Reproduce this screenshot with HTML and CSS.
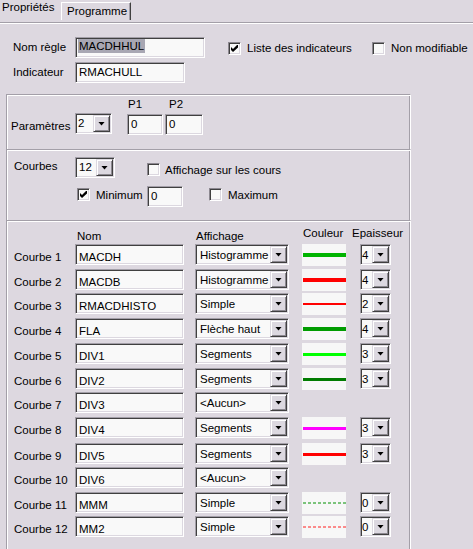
FILE: index.html
```html
<!DOCTYPE html>
<html lang="fr">
<head>
<meta charset="utf-8">
<title>Propriétés</title>
<link rel="stylesheet" href="styles.css">
</head>
<body>
<div class="tabs">
  <div class="tab tab-active">Propriétés</div>
  <div class="tab tab-other">Programme</div>
</div>

<div class="head">
  <div class="hrow">
    <span class="hlbl">Nom règle</span>
    <div class="edit e-nom"><span class="sel">MACDHHUL</span></div>
    <div class="chk chk-liste"><span class="box"><svg class="tick" viewBox="0 0 7 7" width="7" height="7"><polygon points="0,2 2,4 6,0 7,0 7,2.6 2,7 0,5"/></svg></span><span>Liste des indicateurs</span></div>
    <div class="chk chk-nonmod"><span class="box"></span><span>Non modifiable</span></div>
  </div>
  <div class="hrow">
    <span class="hlbl">Indicateur</span>
    <div class="edit e-ind">RMACHULL</div>
  </div>
</div>

<div class="group g1">
  <span class="plbl">Paramètres</span>
  <div class="combo c-par"><span class="val">2</span><span class="btn"></span></div>
  <div class="pcol pcol1"><span class="ptitle">P1</span><div class="edit e-p1">0</div></div>
  <div class="pcol pcol2"><span class="ptitle">P2</span><div class="edit e-p2">0</div></div>
</div>

<div class="group g2">
  <div class="grow grow-a">
    <span class="clbl">Courbes</span>
    <div class="combo c-courbes"><span class="val">12</span><span class="btn"></span></div>
    <div class="chk chk-aff"><span class="box"></span><span>Affichage sur les cours</span></div>
  </div>
  <div class="grow grow-b">
    <div class="chk chk-min"><span class="box"><svg class="tick" viewBox="0 0 7 7" width="7" height="7"><polygon points="0,2 2,4 6,0 7,0 7,2.6 2,7 0,5"/></svg></span><span>Minimum</span></div>
    <div class="edit e-min">0</div>
    <div class="chk chk-max"><span class="box"></span><span>Maximum</span></div>
  </div>
</div>

<div class="group g3">
  <div class="grid">
    <span class="th th-blank"></span>
    <span class="th th-nom">Nom</span>
    <span class="th th-aff">Affichage</span>
    <span class="th th-col">Couleur</span>
    <span class="th th-ep">Epaisseur</span>

    <span class="rl">Courbe 1</span>
    <div class="edit e-row">MACDH</div>
    <div class="combo c-aff"><span class="val">Histogramme</span><span class="btn"></span></div>
    <div class="sw"><i class="ln w4 green1"></i></div>
    <div class="combo c-ep"><span class="val">4</span><span class="btn"></span></div>

    <span class="rl">Courbe 2</span>
    <div class="edit e-row">MACDB</div>
    <div class="combo c-aff"><span class="val">Histogramme</span><span class="btn"></span></div>
    <div class="sw"><i class="ln w4 red"></i></div>
    <div class="combo c-ep"><span class="val">4</span><span class="btn"></span></div>

    <span class="rl">Courbe 3</span>
    <div class="edit e-row">RMACDHISTO</div>
    <div class="combo c-aff"><span class="val">Simple</span><span class="btn"></span></div>
    <div class="sw"><i class="ln w2 red"></i></div>
    <div class="combo c-ep"><span class="val">2</span><span class="btn"></span></div>

    <span class="rl">Courbe 4</span>
    <div class="edit e-row">FLA</div>
    <div class="combo c-aff"><span class="val">Flèche haut</span><span class="btn"></span></div>
    <div class="sw"><i class="ln w4 green4"></i></div>
    <div class="combo c-ep"><span class="val">4</span><span class="btn"></span></div>

    <span class="rl">Courbe 5</span>
    <div class="edit e-row">DIV1</div>
    <div class="combo c-aff"><span class="val">Segments</span><span class="btn"></span></div>
    <div class="sw"><i class="ln w3 lime"></i></div>
    <div class="combo c-ep"><span class="val">3</span><span class="btn"></span></div>

    <span class="rl">Courbe 6</span>
    <div class="edit e-row">DIV2</div>
    <div class="combo c-aff"><span class="val">Segments</span><span class="btn"></span></div>
    <div class="sw"><i class="ln w3 dkgreen"></i></div>
    <div class="combo c-ep"><span class="val">3</span><span class="btn"></span></div>

    <span class="rl">Courbe 7</span>
    <div class="edit e-row">DIV3</div>
    <div class="combo c-aff"><span class="val">&lt;Aucun&gt;</span><span class="btn"></span></div>
    <span class="empty"></span>
    <span class="empty"></span>

    <span class="rl">Courbe 8</span>
    <div class="edit e-row">DIV4</div>
    <div class="combo c-aff"><span class="val">Segments</span><span class="btn"></span></div>
    <div class="sw"><i class="ln w3 magenta"></i></div>
    <div class="combo c-ep"><span class="val">3</span><span class="btn"></span></div>

    <span class="rl">Courbe 9</span>
    <div class="edit e-row">DIV5</div>
    <div class="combo c-aff"><span class="val">Segments</span><span class="btn"></span></div>
    <div class="sw"><i class="ln w3 red"></i></div>
    <div class="combo c-ep"><span class="val">3</span><span class="btn"></span></div>

    <span class="rl">Courbe 10</span>
    <div class="edit e-row">DIV6</div>
    <div class="combo c-aff"><span class="val">&lt;Aucun&gt;</span><span class="btn"></span></div>
    <span class="empty"></span>
    <span class="empty"></span>

    <span class="rl">Courbe 11</span>
    <div class="edit e-row">MMM</div>
    <div class="combo c-aff"><span class="val">Simple</span><span class="btn"></span></div>
    <div class="sw"><svg class="dsvg" width="43" height="2" viewBox="0 0 43 2"><line x1="0" y1="1" x2="43" y2="1" stroke="#009000" stroke-width="1.2" stroke-dasharray="3 2"/></svg></div>
    <div class="combo c-ep"><span class="val">0</span><span class="btn"></span></div>

    <span class="rl">Courbe 12</span>
    <div class="edit e-row">MM2</div>
    <div class="combo c-aff"><span class="val">Simple</span><span class="btn"></span></div>
    <div class="sw"><svg class="dsvg" width="43" height="2" viewBox="0 0 43 2"><line x1="0" y1="1" x2="43" y2="1" stroke="#ff2020" stroke-width="1.2" stroke-dasharray="3 2"/></svg></div>
    <div class="combo c-ep"><span class="val">0</span><span class="btn"></span></div>
  </div>
</div>
</body>
</html>
```

FILE: styles.css
```css
* { box-sizing: border-box; }
html, body { margin: 0; padding: 0; }
body {
  width: 473px;
  height: 549px;
  overflow: hidden;
  background: #ddd8e0;
  font-family: "Liberation Sans", Arial, sans-serif;
  font-size: 11.5px;
  color: #000;
}

/* ---------- tabs ---------- */
.tabs {
  display: flex;
  align-items: flex-start;
  height: 23px;
  border-bottom: 1px solid #a39fa8;
  box-shadow: 0 1px 0 #fff;
}
.tab { white-space: nowrap; line-height: 14px; }
.tab-active { width: 61px; padding: 0 0 0 2px; }
.tab-other {
  width: 70px;
  height: 18px;
  margin-top: 2px;
  padding: 1px 0 0 5px;
  border-left: 1px solid #fff;
  border-top: 1px solid #fff;
  border-right: 1px solid #404040;
  box-shadow: inset -1px 0 0 #a39fa8;
}

/* ---------- common controls ---------- */
.edit {
  height: 21px;
  background: #f9f9f9;
  border: 1px solid;
  border-color: #a39fa8 #fff #fff #a39fa8;
  box-shadow: inset 1px 1px 0 #404040, inset -1px -1px 0 #dcd8e0;
  padding: 2px 0 0 3px;
  line-height: 14px;
  white-space: nowrap;
  overflow: hidden;
}
.combo {
  display: flex;
  height: 21px;
  padding: 1px;
  background: #f9f9f9;
  border: 1px solid;
  border-color: #a39fa8 #fff #fff #a39fa8;
  box-shadow: inset 1px 1px 0 #404040, inset -1px -1px 0 #dcd8e0;
}
.combo .val {
  flex: 1;
  min-width: 0;
  padding: 1px 0 0 1px;
  line-height: 14px;
  white-space: nowrap;
  overflow: hidden;
}
.combo .btn {
  flex: none;
  width: 17px;
  height: 17px;
  display: flex;
  align-items: center;
  justify-content: center;
  background: #dcd8e0;
  border: 1px solid;
  border-color: #dcd8e0 #404040 #404040 #dcd8e0;
  box-shadow: inset 1px 1px 0 #fff, inset -1px -1px 0 #8c8890;
}
.combo .btn::after {
  content: "";
  width: 7px;
  height: 4px;
  background: #000;
  clip-path: polygon(0 0, 100% 0, 50% 100%);
}

.chk { display: flex; align-items: center; gap: 6px; line-height: 14px; white-space: nowrap; }
.box {
  flex: none;
  width: 13px;
  height: 13px;
  display: flex;
  align-items: center;
  justify-content: center;
  background: #f9f9f9;
  border: 1px solid;
  border-color: #8c8890 #fff #fff #8c8890;
  box-shadow: inset 1px 1px 0 #404040, inset -1px -1px 0 #dcd8e0;
}
.tick { fill: #000; display: block; }

/* ---------- header rows ---------- */
.head {
  display: flex;
  flex-direction: column;
  gap: 4px;
  padding: 14px 0 11px 13px;
}
.hrow { display: flex; align-items: flex-start; height: 21px; }
.hlbl { width: 62px; line-height: 14px; padding-top: 3px; }
.e-nom { width: 130px; padding: 1px 0 0 2px; }
.sel { display: inline-block; background: #a8a7b3; padding: 0 1px; line-height: 14px; }
.e-ind { width: 110px; }
.hrow .chk { height: 21px; padding-top: 1px; }
.chk-liste { margin-left: 23px; width: 144px; }

/* ---------- group boxes ---------- */
.group {
  margin-left: 6px;
  width: 405px;
  border-top: 1px solid #a39fa8;
  border-left: 1px solid #a39fa8;
  border-right: 1px solid #fff;
  box-shadow: inset 0 1px 0 #fff, inset 1px 0 0 #fff, inset -1px 0 0 #a39fa8;
}

.g1 {
  height: 55px;
  display: flex;
  align-items: flex-start;
  padding: 2px 0 0 4px;
}
.plbl { width: 64px; margin-top: 22px; line-height: 14px; }
.c-par { width: 37px; margin-top: 16px; }
.pcol { display: flex; flex-direction: column; gap: 3px; }
.ptitle { line-height: 14px; }
.pcol1 { margin-left: 15px; }
.pcol1 .ptitle { padding-left: 1px; }
.pcol2 { margin-left: 2px; }
.pcol2 .ptitle { padding-left: 4px; }
.e-p1 { width: 36px; }
.e-p2 { width: 38px; }

.g2 {
  height: 71px;
  padding-top: 7px;
  display: flex;
  flex-direction: column;
  gap: 8px;
}
.grow { display: flex; height: 21px; }
.grow-a { align-items: center; padding-left: 7px; }
.clbl { width: 61px; line-height: 14px; padding-bottom: 3px; }
.c-courbes { width: 40px; }
.c-courbes .val { padding-left: 2px; }
.chk-aff { margin-left: 32px; margin-top: 4px; gap: 5px; }
.grow-b { align-items: flex-start; padding-left: 70px; }
.grow-b .chk { height: 15px; margin-top: 1px; }
.chk-min { width: 70px; }
.e-min { width: 36px; }
.chk-max { margin-left: 26px; }

/* ---------- courbes grid ---------- */
.g3 { height: 340px; }
.grid {
  display: grid;
  grid-template-columns: 68px 120px 107px 58px 31px;
  grid-template-rows: 23px 25px 24px 25px 25px 25px 24px 25px 26px 24px 25px 24px 24px;
  align-items: start;
  justify-items: start;
}
.th { line-height: 14px; white-space: nowrap; }
.th-nom { padding: 8px 0 0 2px; }
.th-aff { padding: 8px 0 0 1px; }
.th-col { padding: 5px 0 0 1px; }
.th-ep { padding-top: 5px; margin-left: -8px; }

.rl { padding: 5px 0 0 7px; line-height: 16px; white-space: nowrap; }
.e-row { width: 109px; padding: 4px 0 0 3px; line-height: 16px; }
.c-aff { width: 94px; }
.c-aff .val { padding: 2px 0 0 3px; }
.c-ep { width: 31px; }
.c-ep .val { padding: 2px 0 0 0; }

.sw {
  width: 44px;
  height: 22px;
  background: #f7f7f7;
  display: flex;
  align-items: center;
  padding-left: 1px;
}
.ln { display: block; flex: 1; }
.dsvg { display: block; }
.w4 { height: 4px; }
.w3 { height: 3px; }
.w2 { height: 2px; }
.green1 { background: #00b400; }
.green4 { background: #009c00; }
.red { background: #ff0000; }
.lime { background: #00ff00; }
.dkgreen { background: #007c00; }
.magenta { background: #ff00ff; }
```
